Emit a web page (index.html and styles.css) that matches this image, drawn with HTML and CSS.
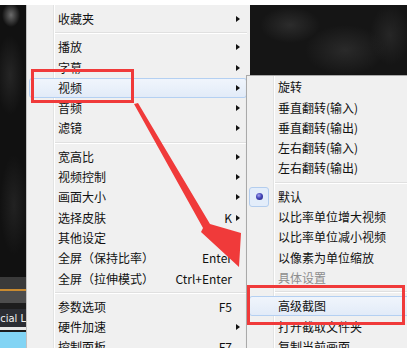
FILE: index.html
```html
<!DOCTYPE html>
<html lang="zh-CN">

<head>
  <meta charset="UTF-8">
  <meta name="viewport" content="width=device-width, initial-scale=1.0">
  <title>视频 - 右键菜单</title>
  <link rel="stylesheet" href="styles.css">
</head>

<body>
  <div class="screen">
    <div class="shot">
      <!-- 播放器画面（左侧） -->
      <div class="video-left">
        <div class="video-dark"></div>
        <div class="ctrl-bar"></div>
        <div class="seek-line"></div>
        <div class="ctrl-bar light"></div>
        <div class="ctrl-gap"></div>
        <div class="caption"><span>Official L</span></div>
        <div class="caption-rule"></div>
        <div class="ctrl-gap thin"></div>
        <div class="taskbar"></div>
      </div>

      <!-- 主菜单 -->
      <div class="menu main-menu">
        <div class="item"><i class="icon"></i><span class="label">收藏夹</span><i class="arrow"></i></div>
        <div class="sep"><span></span></div>
        <div class="item"><i class="icon"></i><span class="label">播放</span><i class="arrow"></i></div>
        <div class="item"><i class="icon"></i><span class="label">字幕</span><i class="arrow"></i></div>
        <div class="item active"><i class="icon"></i><span class="label">视频</span><i class="arrow"></i></div>
        <div class="item"><i class="icon"></i><span class="label">音频</span><i class="arrow"></i></div>
        <div class="item"><i class="icon"></i><span class="label">滤镜</span><i class="arrow"></i></div>
        <div class="sep"><span></span></div>
        <div class="item"><i class="icon"></i><span class="label">宽高比</span><i class="arrow"></i></div>
        <div class="item"><i class="icon"></i><span class="label">视频控制</span><i class="arrow"></i></div>
        <div class="item"><i class="icon"></i><span class="label">画面大小</span><i class="arrow"></i></div>
        <div class="item"><i class="icon"></i><span class="label">选择皮肤</span><span class="key">K</span><i class="arrow"></i></div>
        <div class="item"><i class="icon"></i><span class="label">其他设定</span><i class="arrow"></i></div>
        <div class="item"><i class="icon"></i><span class="label">全屏（保持比率）</span><span class="key">Enter</span><i class="arrow none"></i></div>
        <div class="item"><i class="icon"></i><span class="label">全屏（拉伸模式）</span><span class="key">Ctrl+Enter</span><i class="arrow none"></i></div>
        <div class="sep"><span></span></div>
        <div class="item"><i class="icon"></i><span class="label">参数选项</span><span class="key">F5</span><i class="arrow none"></i></div>
        <div class="item"><i class="icon"></i><span class="label">硬件加速</span><i class="arrow"></i></div>
        <div class="item"><i class="icon"></i><span class="label">控制面板</span><span class="key">F7</span><i class="arrow none"></i></div>
      </div>

      <!-- 播放器画面（右上） -->
      <div class="video-right"></div>

      <!-- 视频 子菜单 -->
      <div class="menu sub-menu">
        <div class="item"><i class="icon"></i><span class="label">旋转</span></div>
        <div class="item"><i class="icon"></i><span class="label">垂直翻转(输入)</span></div>
        <div class="item"><i class="icon"></i><span class="label">垂直翻转(输出)</span></div>
        <div class="item"><i class="icon"></i><span class="label">左右翻转(输入)</span></div>
        <div class="item"><i class="icon"></i><span class="label">左右翻转(输出)</span></div>
        <div class="sep"><span></span></div>
        <div class="item"><i class="icon radio"><b></b></i><span class="label">默认</span></div>
        <div class="item"><i class="icon"></i><span class="label">以比率单位增大视频</span></div>
        <div class="item"><i class="icon"></i><span class="label">以比率单位减小视频</span></div>
        <div class="item"><i class="icon"></i><span class="label">以像素为单位缩放</span></div>
        <div class="item disabled"><i class="icon"></i><span class="label">具体设置</span></div>
        <div class="sep"><span></span></div>
        <div class="item active"><i class="icon"></i><span class="label">高级截图</span></div>
        <div class="item"><i class="icon"></i><span class="label">打开截取文件夹</span></div>
        <div class="item"><i class="icon"></i><span class="label">复制当前画面</span></div>
      </div>
    </div>

    <!-- 红色标注 -->
    <svg class="marks" width="407" height="353" viewBox="0 0 407 353">
      <rect x="32.5" y="70.5" width="100" height="31" fill="none" stroke="#f03a3a" stroke-width="3" />
      <rect x="248.5" y="286.5" width="155" height="37" fill="none" stroke="#f03a3a" stroke-width="3" />
      <polygon points="134,104 138,103 210,224 241,233 239,267 201,232 203,228" fill="#f03a3a" />
    </svg>
  </div>
</body>

</html>
```

FILE: styles.css
```css
* {
  margin: 0;
  padding: 0;
  box-sizing: border-box;
}

body {
  background: #fff;
  font-family: "Noto Sans CJK SC", "Liberation Sans", sans-serif;
  font-size: 12px;
  color: #111;
}

.screen {
  position: relative;
  width: 407px;
  height: 353px;
  overflow: hidden;
}

.shot {
  position: relative;
  display: flex;
  align-items: flex-start;
  margin-top: 5px;
  height: 343px;
  overflow: hidden;
}

/* 播放器画面 */
.video-left {
  width: 26px;
  height: 343px;
  flex: none;
  display: flex;
  flex-direction: column;
}

.video-dark {
  height: 272px;
  background:
    radial-gradient(ellipse 9px 12px at 11px 10px, #6b6b6b, rgba(60, 60, 60, 0) 100%),
    radial-gradient(ellipse 14px 40px at 10px 70px, #252525, rgba(30, 30, 30, 0) 100%),
    radial-gradient(ellipse 14px 50px at 14px 200px, #222, rgba(30, 30, 30, 0) 100%),
    #111;
}

.ctrl-bar {
  height: 12px;
  background: #3a3a3a;
}

.ctrl-bar.light {
  background: #4d4d4d;
}

.seek-line {
  height: 2px;
  background: #c88a30;
}

.ctrl-gap {
  height: 6px;
  background: #1d1d1d;
}

.ctrl-gap.thin {
  height: 2px;
}

.caption {
  height: 18px;
  display: flex;
  justify-content: flex-end;
  align-items: center;
  overflow: hidden;
  white-space: nowrap;
  background: #2b2d33;
  color: #f2f2f2;
  font-family: "DejaVu Sans Condensed", "DejaVu Sans", sans-serif;
  font-size: 11px;
}

.caption-rule {
  height: 3px;
  background: #e9e9e9;
}

.taskbar {
  height: 16px;
  background: #82d4f4;
}

.video-right {
  flex: 1;
  height: 70px;
  background:
    radial-gradient(ellipse 30px 18px at 40px 20px, #2c2c2c, rgba(40, 40, 40, 0) 100%),
    radial-gradient(ellipse 40px 25px at 95px 45px, #2a2a2a, rgba(40, 40, 40, 0) 100%),
    radial-gradient(ellipse 20px 30px at 140px 30px, #262626, rgba(40, 40, 40, 0) 100%),
    #151515;
}

/* 菜单 */
.menu {
  background:
    linear-gradient(to right, #f0f0f0 0, #f0f0f0 26px, #e2e3e3 26px, #e2e3e3 27px, #fff 27px, #fff 28px, #f0f0f0 28px);
}

.main-menu {
  width: 224px;
  height: 343px;
  flex: none;
  border-left: 1px solid #c2c2c2;
  padding: 3.8px 3px 0 2px;
}

.sub-menu {
  position: absolute;
  left: 246px;
  top: 70px;
  width: 180px;
  height: 300px;
  border: 1px solid #a9a9a9;
  padding: 1.1px 2px 0 2px;
  box-shadow: 2px 2px 3px rgba(0, 0, 0, 0.25);
}

.item {
  height: 20.3px;
  display: flex;
  align-items: center;
  border: 1px solid transparent;
  border-radius: 3px;
  white-space: nowrap;
  line-height: 16px;
}

.item.active {
  border-color: #b4d0f2;
  background: linear-gradient(#f0f5fc, #e2ebf8);
}

.item.disabled {
  color: #8d8d8d;
}

.icon {
  width: 20px;
  height: 20.3px;
  flex: none;
  margin: -1px 9px -1px -1px;
}

.icon.radio {
  display: flex;
  align-items: center;
  justify-content: center;
  border: 1px solid #b3cdee;
  border-radius: 3px;
  background: #e3edfa;
}

.icon.radio b {
  width: 7px;
  height: 7px;
  border-radius: 50%;
  background: radial-gradient(circle at 40% 35%, #a4a4f0 0, #4646b8 45%, #1f1f74 100%);
}

.label {
  flex: 1;
}

.key {
  flex: none;
}

.arrow {
  flex: none;
  width: 0;
  height: 0;
  margin: 0 6px 0 4px;
  border-left: 4px solid #111;
  border-top: 3.5px solid transparent;
  border-bottom: 3.5px solid transparent;
}

.arrow.none {
  border-left-color: transparent;
}

.sep {
  height: 8px;
  margin-left: 26px;
  display: flex;
  align-items: center;
}

.sep span {
  flex: 1;
  height: 2px;
  border-top: 1px solid #e0e0e0;
  border-bottom: 1px solid #fff;
}

/* 红色标注 */
.marks {
  position: absolute;
  top: 0;
  left: 0;
  pointer-events: none;
}
```
